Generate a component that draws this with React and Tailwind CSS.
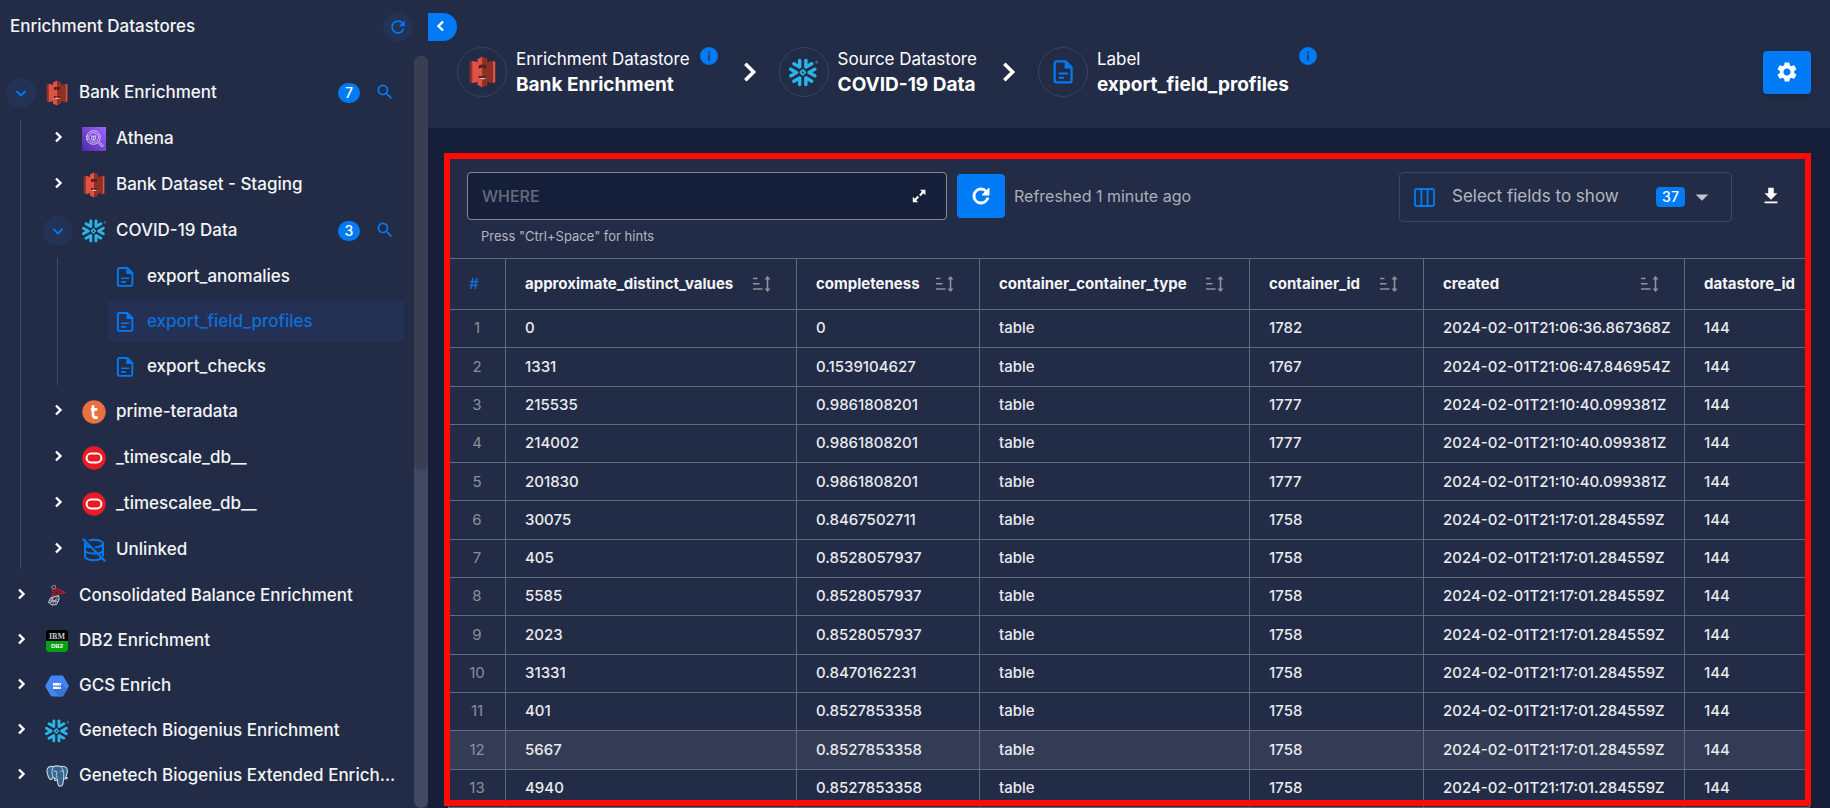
import {
  MdRefresh,
  MdSearch,
  MdSettings,
  MdFileDownload,
  MdArrowDropDown,
} from "react-icons/md";
import { SiSnowflake } from "react-icons/si";

/* ---------- icons ---------- */

function S3Icon({ className = "h-[26px] w-[22px]" }) {
  return (
    <svg viewBox="0 0 22 26" className={className} aria-hidden="true">
      <path d="M0.6 4.6 2.6 3.8V22.2L0.6 21.4Z" fill="#8c3123" />
      <path d="M2.6 3.8 8 5.2V20.8L2.6 22.2Z" fill="#e05243" />
      <path d="M21.4 4.6 19.4 3.8V22.2L21.4 21.4Z" fill="#e05243" />
      <path d="M19.4 3.8 14 5.2V20.8L19.4 22.2Z" fill="#8c3123" />
      <path d="M11 0.4 7 2.4V7.6L11 6.9Z" fill="#e05243" />
      <path d="M11 0.4 15 2.4V7.6L11 6.9Z" fill="#8c3123" />
      <path d="M8 7.4H14V18.6H8Z" fill="#5e1f18" />
      <path d="M11 9.6 7.4 10.2V15.8L11 16.4Z" fill="#e05243" />
      <path d="M11 9.6 14.6 10.2V15.8L11 16.4Z" fill="#8c3123" />
      <path d="M7 18.4 11 19.3 15 18.4 11 17.6Z" fill="#f2b0a9" />
      <path d="M11 19.3 7 18.4V23.6L11 25.6Z" fill="#e05243" />
      <path d="M11 19.3 15 18.4V23.6L11 25.6Z" fill="#8c3123" />
    </svg>
  );
}

function AthenaIcon() {
  return (
    <svg viewBox="0 0 24 24" className="size-6" aria-hidden="true">
      <defs>
        <linearGradient id="athena" x1="0" y1="1" x2="1" y2="0">
          <stop offset="0" stopColor="#4d27a8" />
          <stop offset="1" stopColor="#a166ff" />
        </linearGradient>
      </defs>
      <rect width="24" height="24" fill="url(#athena)" />
      <g fill="none" stroke="#ece4ff" strokeWidth="0.8">
        <circle cx="11.5" cy="10.5" r="6.8" />
        <circle cx="11.5" cy="10.5" r="4.8" />
        <path d="M9.6 8.6v4M9.6 8.6c0 .9 3.8.9 3.8 0v4c0 .9-3.8.9-3.8 0M11.5 9.5v3.6" />
        <path d="M16.2 15.6 19.4 19.4a1 1 0 0 0 1.4-1.4L17.2 14.6" />
        <path d="M4 9.2h2M4 11.8h2" />
      </g>
    </svg>
  );
}

function SnowflakeIcon({ className = "size-6" }) {
  return <SiSnowflake className={`text-[#29b5e8] ${className}`} aria-hidden="true" />;
}

function TeradataIcon() {
  return (
    <svg viewBox="0 0 24 24" className="size-6" aria-hidden="true">
      <circle cx="12" cy="12" r="11.7" fill="#e8713f" />
      <path
        d="M11 5.2v9.6c0 1.9.9 2.8 2.7 2.8h2.1M8.8 9.4h6.4"
        fill="none"
        stroke="#fff"
        strokeWidth="2.7"
      />
    </svg>
  );
}

function OracleIcon() {
  return (
    <svg viewBox="0 0 24 24" className="size-6" aria-hidden="true">
      <circle cx="12" cy="12" r="11.7" fill="#ea1b22" />
      <rect x="4.6" y="7.6" width="14.8" height="8.8" rx="4.4" fill="none" stroke="#fff" strokeWidth="2" />
    </svg>
  );
}

function UnlinkedIcon() {
  return (
    <svg viewBox="0 0 24 24" className="size-6" fill="none" stroke="#007bf5" strokeWidth="2" aria-hidden="true">
      <path d="M7 2.6C8.5 2 10.2 1.8 12 1.8c5 0 9 1.7 9 3.7s-3.4 3.5-8 3.7" />
      <path d="M21 5.5v12.8M21 12c0 1.3-1.7 2.5-4.3 3.1" />
      <path d="M3 4.5v14c0 2 4 3.7 9 3.7 3 0 5.6-.6 7.2-1.5" />
      <path d="M3 6.3C3.6 7.7 6 8.7 8.6 9.1M3 12.4c.8 1.7 4.6 3.2 9 3.2h2.5" />
      <path d="M0.7 0.7 23.3 23.3" />
    </svg>
  );
}

function SqlServerIcon() {
  return (
    <svg viewBox="0 0 24 24" className="size-6" fill="none" aria-hidden="true">
      <path d="M6.5 2.5 10 1.2 11 4.5 7.5 5Z" stroke="#9aa3b4" strokeWidth="0.8" />
      <path
        d="M7.5 5.5 12 4.5 20.5 8.6 13 10.5 9.5 13.5 5.5 15C8 12 8.8 9.5 7.5 5.5Z"
        fill="#8c1d23"
        stroke="#c9252c"
        strokeWidth="0.9"
      />
      <path d="M9 6 13 10.5 16 6.6M12 4.6 12.5 10.5 8.6 9" stroke="#2b2438" strokeWidth="0.6" />
      <path d="M5.5 14 13.5 11.5 14.2 15 11.5 20.5 7 21 3.5 18.5Z" stroke="#c4cad6" strokeWidth="1" />
      <path
        d="M5.5 14 9.5 17 7 21M13.5 11.5 9.5 17 11.5 20.5M3.5 18.5 9.5 17 14.2 15M8.5 13l-3 6.5M5 16l8.5 2"
        stroke="#c4cad6"
        strokeWidth="0.7"
      />
    </svg>
  );
}

function Db2Icon() {
  return (
    <svg viewBox="0 0 24 24" className="size-6" aria-hidden="true">
      <rect x="1" y="1" width="22" height="22" rx="3" fill="#000" />
      <path d="M1 12h22v8a3 3 0 0 1-3 3H4a3 3 0 0 1-3-3Z" fill="#06a010" />
      <text x="12" y="10.2" textAnchor="middle" fontSize="8" fontWeight="700" fill="#c9c9c9" fontFamily="Liberation Serif, serif">
        IBM
      </text>
      <text x="12" y="19.2" textAnchor="middle" fontSize="6" fontWeight="700" fill="#fff" fontFamily="Liberation Sans, sans-serif">
        DB2
      </text>
    </svg>
  );
}

function GcsIcon() {
  return (
    <svg viewBox="0 0 24 24" className="size-6" aria-hidden="true">
      <path
        d="M6.8 1.6h10.4a1.6 1.6 0 0 1 1.3.8l5 8.8a1.6 1.6 0 0 1 0 1.6l-5 8.8a1.6 1.6 0 0 1-1.3.8H6.8a1.6 1.6 0 0 1-1.3-.8l-5-8.8a1.6 1.6 0 0 1 0-1.6l5-8.8a1.6 1.6 0 0 1 1.3-.8Z"
        fill="#4285f4"
      />
      <path d="M16 9 22.3 15.2 18.5 21.6a1.6 1.6 0 0 1-1.3.8h-3.8L8 15Z" fill="#3874d8" />
      <path d="M8 9h8v2.4H8ZM8 12.7h8v2.4H8Z" fill="#fff" />
      <path d="M14 10.2h1M14 13.9h1" stroke="#4285f4" strokeWidth="0.8" />
    </svg>
  );
}

function PostgresIcon() {
  return (
    <svg viewBox="0 0 24 24" className="size-6" strokeLinejoin="round" strokeLinecap="round" aria-hidden="true">
      <path
        d="M8 2.8C5 1.6 2 3 2 6.6c0 3.4 1.8 8.8 3.6 9 1 .1 1.6-1 2.4-2 .6.5 1.5.6 2.3.4-.1 1-1.3 1.5-.8 2 .7.6 2 .4 2.8-.2.2 2.4.2 6.4 2.6 6.4 2 0 3-1.4 3.2-3.4l.5-4.2c1.4.5 3.2.2 3.8-.7.3-.5-1.2-.3-2-.5 1.8-2.8 2.8-7.6 1.2-9.4C20 2.1 17.6 2 15.8 2.6 13.500 1.8 10.2 1.7 8 2.8Z"
        fill="#336791"
        stroke="#cfd8e3"
        strokeWidth="1.1"
      />
      <path
        d="M8 2.8C6.6 5.5 6.8 9.5 8 13.6M15.8 2.6c2.4 2.2 3.6 6.2 2.5 11.6M12.3 15.8c-.2-1.6 0-2.6-.9-3.8-.7-1 .9-2.5.3-4.6M15.8 7.2c1.2-.5 1.9-.2 1.9.5"
        fill="none"
        stroke="#cfd8e3"
        strokeWidth="0.9"
      />
      <circle cx="10" cy="7.3" r="0.7" fill="#fff" />
    </svg>
  );
}

function FileIcon({ className = "h-5 w-[18px]" }) {
  return (
    <svg viewBox="0 0 18 21" className={`text-[#007bf5] ${className}`} aria-hidden="true">
      <path
        d="M3 1h8.5L16.7 6.2V18.5a1.3 1.3 0 0 1-1.3 1.3H3a1.5 1.5 0 0 1-1.5-1.5V2.5A1.5 1.5 0 0 1 3 1Z"
        fill="none"
        stroke="currentColor"
        strokeWidth="2"
      />
      <path d="M10.5 1v6.4H17Z" fill="currentColor" />
      <path d="M5 11.8h8.5M5 15.6h5" stroke="currentColor" strokeWidth="1.8" />
    </svg>
  );
}

function Chevron({ dir = "right", className = "size-3.5", width = 2.4 }) {
  const d = {
    right: "M5 2.5 9.5 7 5 11.5",
    left: "M9 2.5 4.5 7 9 11.5",
    down: "M2.5 5 7 9.5 11.5 5",
  }[dir];
  return (
    <svg viewBox="0 0 14 14" className={className} fill="none" stroke="currentColor" strokeWidth={width} aria-hidden="true">
      <path d={d} />
    </svg>
  );
}

function InfoIcon() {
  return (
    <svg viewBox="0 0 18 18" className="size-[18px] shrink-0" role="img" aria-label="Info">
      <circle cx="9" cy="9" r="9" fill="#007bf5" />
      <path d="M9 4.5v2M9 7.8v6" stroke="#1d3d78" strokeWidth="1.8" />
    </svg>
  );
}

function SortIcon() {
  return (
    <svg viewBox="0 0 18 16" className="h-4 w-[18px]" fill="none" stroke="#8f9298" strokeWidth="1.6" aria-hidden="true">
      <path d="M0 2.5h4.5M0 7.8h6.5M0 13h9.5" />
      <path d="M14.5 2v12" />
      <path d="M14.5 0 17.5 3.6h-6ZM14.5 16 17.5 12.4h-6Z" fill="#8f9298" stroke="none" />
    </svg>
  );
}

function ExpandIcon() {
  return (
    <svg viewBox="0 0 14 14" className="size-3.5" fill="currentColor" aria-hidden="true">
      <path d="M8 0.8h5.4v5.4l-1.9-1.9-2.9 2.9-1.5-1.5 2.8-2.9ZM6.2 13.2H.8V7.8l1.9 1.9 2.9-2.9 1.5 1.5-2.9 2.9Z" />
    </svg>
  );
}

function ColumnsIcon() {
  return (
    <svg viewBox="0 0 21 19" className="h-[19px] w-[21px] shrink-0" fill="none" stroke="#007bf5" strokeWidth="1.8" aria-hidden="true">
      <rect x="1" y="1" width="19" height="17" rx="1.5" />
      <path d="M7.4 1v17M13.6 1v17" />
    </svg>
  );
}

/* ---------- sidebar ---------- */

const children = [
  { name: "Athena", icon: <AthenaIcon /> },
  { name: "Bank Dataset - Staging", icon: <S3Icon /> },
  {
    name: "COVID-19 Data",
    icon: <SnowflakeIcon />,
    count: 3,
    leaves: ["export_anomalies", "export_field_profiles", "export_checks"],
  },
  { name: "prime-teradata", icon: <TeradataIcon /> },
  { name: "_timescale_db__", icon: <OracleIcon /> },
  { name: "_timescalee_db__", icon: <OracleIcon /> },
  { name: "Unlinked", icon: <UnlinkedIcon /> },
];

const roots = [
  { name: "Bank Enrichment", icon: <S3Icon />, count: 7, children },
  { name: "Consolidated Balance Enrichment", icon: <SqlServerIcon /> },
  { name: "DB2 Enrichment", icon: <Db2Icon /> },
  { name: "GCS Enrich", icon: <GcsIcon /> },
  { name: "Genetech Biogenius Enrichment", icon: <SnowflakeIcon /> },
  { name: "Genetech Biogenius Extended Enrich...", icon: <PostgresIcon /> },
];

function TreeRow({ item, nested = false }) {
  const open = Boolean(item.count);
  return (
    <div
      className={`flex items-center pr-[19px] ${nested || open ? "h-[46px]" : "h-[45px]"} ${
        nested ? "pl-[23px]" : "pl-1.5"
      }`}
    >
      <button
        type="button"
        aria-label={`Toggle ${item.name}`}
        aria-expanded={open}
        className={`flex size-[30px] shrink-0 items-center justify-center rounded-full ${
          open ? "bg-[#233255] text-[#007bf5]" : "pb-1 text-white"
        }`}
      >
        <Chevron dir={open ? "down" : "right"} width={open ? 1.8 : 2.4} />
      </button>
      <span className="ml-[9px] flex w-6 shrink-0 justify-center">{item.icon}</span>
      <a href="#" className="ml-2.5 whitespace-nowrap text-[17px] font-medium text-[#f4f5f7]">
        {item.name}
      </a>
      {open && (
        <>
          <span className="ml-auto flex h-5 w-[22px] items-center justify-center rounded-full bg-[#007bf5] text-sm font-medium text-white">
            {item.count}
          </span>
          <button type="button" aria-label={`Search ${item.name}`} className="ml-[15px] pb-0.5 text-[#007bf5]">
            <MdSearch className="size-5" />
          </button>
        </>
      )}
    </div>
  );
}

function LeafRow({ name }) {
  const active = name === "export_field_profiles";
  return (
    <li className="flex h-[45px] items-center pr-2.5 pl-[51px]">
      <a
        href="#"
        aria-current={active ? "page" : undefined}
        className={`flex h-[41px] flex-1 items-center gap-[13px] rounded px-2 text-[17px] font-medium ${
          active ? "bg-[#243154] text-[#0b6fd9]" : "text-[#f4f5f7]"
        }`}
      >
        <FileIcon />
        {name}
      </a>
    </li>
  );
}

const branchLine = "relative before:absolute before:inset-y-1 before:left-0 before:w-px before:bg-[#434b62]";

function Sidebar() {
  return (
    <aside className="flex w-[428px] shrink-0 flex-col bg-[#232c46]">
      <div className="flex h-14 shrink-0 items-center justify-between pr-[15px] pb-0.5 pl-2.5">
        <h1 className="text-[17px] font-medium text-[#f4f5f7]">Enrichment Datastores</h1>
        <button
          type="button"
          aria-label="Refresh datastores"
          className="flex size-[30px] items-center justify-center rounded-full bg-[#233255] text-[#007bf5]"
        >
          <MdRefresh className="size-5" />
        </button>
      </div>
      <div className="flex min-h-0 flex-1">
        <ul className="min-w-0 flex-1 overflow-hidden pt-3.5">
          {roots.map((root) => (
            <li key={root.name}>
              <TreeRow item={root} />
              {root.children && (
                <ul className={`ml-5 ${branchLine}`}>
                  {root.children.map((child) => (
                    <li key={child.name}>
                      <TreeRow item={child} nested />
                      {child.leaves && (
                        <ul className={`ml-[37px] ${branchLine}`}>
                          {child.leaves.map((leaf) => (
                            <LeafRow key={leaf} name={leaf} />
                          ))}
                        </ul>
                      )}
                    </li>
                  ))}
                </ul>
              )}
            </li>
          ))}
        </ul>
        <div className="w-3.5 rounded-full bg-[#424862]">
          <div className="h-[55%] rounded-full bg-[#3a3e51]" />
        </div>
      </div>
    </aside>
  );
}

/* ---------- header ---------- */

function Crumb({ icon, label, value, info }) {
  return (
    <div className="flex items-center">
      <span className="flex size-[50px] shrink-0 items-center justify-center rounded-full border border-[#3a435b]">
        {icon}
      </span>
      <span className="ml-[9px] flex flex-col whitespace-nowrap text-white">
        <span className="text-[17px] leading-[26px]">{label}</span>
        <span className="text-[19px] leading-[26px] font-bold">{value}</span>
      </span>
      {info && (
        <span className="mt-px ml-2.5 self-start">
          <InfoIcon />
        </span>
      )}
    </div>
  );
}

function Header() {
  return (
    <header className="flex h-32 shrink-0 items-center bg-[#232c46] pr-[19px]">
      <button
        type="button"
        aria-label="Collapse sidebar"
        className="mt-[13px] flex h-7 w-[29px] shrink-0 items-center justify-center self-start rounded-r-full bg-[#007bf5] pr-1 pb-0.5 text-white"
      >
        <Chevron dir="left" />
      </button>
      <nav aria-label="Breadcrumb" className="mt-4 flex items-center">
        <Crumb icon={<S3Icon className="h-8 w-[27px]" />} label="Enrichment Datastore" value="Bank Enrichment" info />
        <Chevron className="mr-[17px] ml-[18px] size-[26px] text-white" width={1.9} />
        <Crumb icon={<SnowflakeIcon className="size-[29px]" />} label="Source Datastore" value="COVID-19 Data" />
        <Chevron className="mr-[17px] ml-[18px] size-[26px] text-white" width={1.9} />
        <Crumb icon={<FileIcon className="h-6 w-5" />} label="Label" value="export_field_profiles" info />
      </nav>
      <button
        type="button"
        aria-label="Settings"
        className="mt-4 ml-auto flex h-[43px] w-12 items-center justify-center rounded bg-[#007bf5] text-white shadow-md"
      >
        <MdSettings className="size-6" />
      </button>
    </header>
  );
}

/* ---------- table ---------- */

const columns = [
  ["approximate_distinct_values", "w-[291px]"],
  ["completeness", "w-[183px]"],
  ["container_container_type", "w-[270px]"],
  ["container_id", "w-[174px]"],
  ["created", "w-[261px]"],
  ["datastore_id", ""],
];

const rows = [
  ["0", "0", "1782", "2024-02-01T21:06:36.867368Z"],
  ["1331", "0.1539104627", "1767", "2024-02-01T21:06:47.846954Z"],
  ["215535", "0.9861808201", "1777", "2024-02-01T21:10:40.099381Z"],
  ["214002", "0.9861808201", "1777", "2024-02-01T21:10:40.099381Z"],
  ["201830", "0.9861808201", "1777", "2024-02-01T21:10:40.099381Z"],
  ["30075", "0.8467502711", "1758", "2024-02-01T21:17:01.284559Z"],
  ["405", "0.8528057937", "1758", "2024-02-01T21:17:01.284559Z"],
  ["5585", "0.8528057937", "1758", "2024-02-01T21:17:01.284559Z"],
  ["2023", "0.8528057937", "1758", "2024-02-01T21:17:01.284559Z"],
  ["31331", "0.8470162231", "1758", "2024-02-01T21:17:01.284559Z"],
  ["401", "0.8527853358", "1758", "2024-02-01T21:17:01.284559Z"],
  ["5667", "0.8527853358", "1758", "2024-02-01T21:17:01.284559Z"],
  ["4940", "0.8527853358", "1758", "2024-02-01T21:17:01.284559Z"],
];

function Toolbar() {
  return (
    <div className="flex h-[104px] shrink-0 items-start pt-[18px] pr-7 pl-[19px]">
      <div className="w-[480px]">
        <div className="flex h-12 items-center rounded border border-[#858890] bg-[#161f39] pr-5 pl-3.5">
          <input
            aria-label="Where clause"
            aria-describedby="where-hint"
            placeholder="WHERE"
            className="min-w-0 flex-1 bg-transparent font-medium text-white outline-none placeholder:text-[#656c7c]"
          />
          <button type="button" aria-label="Expand editor" className="text-white">
            <ExpandIcon />
          </button>
        </div>
        <p id="where-hint" className="mt-1.5 ml-3.5 text-[13px] leading-5 text-[#b4b7c0]">
          Press "Ctrl+Space" for hints
        </p>
      </div>
      <div className="ml-2.5 flex h-12 items-center gap-[9px]">
        <button
          type="button"
          aria-label="Refresh table"
          className="flex h-11 w-12 items-center justify-center rounded bg-[#007bf5] text-white"
        >
          <MdRefresh className="size-6 [&_path:last-child]:stroke-current [&_path:last-child]:stroke-1" />
        </button>
        <span className="text-base text-[#abafb9]">Refreshed 1 minute ago</span>
      </div>
      <div className="ml-auto flex h-[50px] w-[333px] items-center rounded border border-[#3d465d] px-3.5">
        <ColumnsIcon />
        <select
          aria-label="Fields to show"
          className="ml-[17px] min-w-0 flex-1 appearance-none bg-transparent text-[17px] text-[#b4b7c0] outline-none"
        >
          <option>Select fields to show</option>
        </select>
        <span className="flex h-5 w-[29px] items-center justify-center rounded bg-[#007bf5] text-sm font-medium text-white">
          37
        </span>
        <MdArrowDropDown className="ml-0.5 size-[30px] text-[#c4c6cc]" aria-hidden="true" />
      </div>
      <button type="button" aria-label="Download" className="ml-7 flex h-12 items-center text-white">
        <MdFileDownload className="size-[22px]" />
      </button>
    </div>
  );
}

function DataTable() {
  return (
    <table className="h-full w-full table-fixed border-collapse text-left text-[15px]">
      <thead>
        <tr className="h-[51px]">
          <th scope="col" className="w-[57px] border border-[#626a7d] pr-1.5 text-center font-medium text-[#1673d6]">
            #
          </th>
          {columns.map(([name, width]) => (
            <th key={name} scope="col" className={`border border-[#626a7d] pr-[25px] pl-[19px] ${width}`}>
              <span className="flex items-center justify-between font-bold text-[#f4f5f7]">
                {name}
                {width && <SortIcon />}
              </span>
            </th>
          ))}
        </tr>
      </thead>
      <tbody>
        {rows.map(([distinct, completeness, id, created], i) => (
          <tr key={i} className={i === 11 ? "bg-[#343b54]" : ""}>
            <td className="border border-[#626a7d] text-center text-[#8c9099]">{i + 1}</td>
            {[distinct, completeness, "table", id, created, "144"].map((value, c) => (
              <td key={c} className="border border-[#626a7d] pl-[19px] font-medium whitespace-nowrap text-[#e9ebef]">
                {value}
              </td>
            ))}
          </tr>
        ))}
      </tbody>
    </table>
  );
}

export default function App() {
  return (
    <div className="flex h-screen overflow-hidden bg-[#161f39] font-[Inter,sans-serif]">
      <Sidebar />
      <main className="flex min-w-0 flex-1 flex-col">
        <Header />
        <section className="relative mx-5 mt-[26px] flex min-h-0 flex-1 flex-col bg-[#232c46]">
          <Toolbar />
          <div className="min-h-0 flex-1 overflow-hidden">
            <DataTable />
          </div>
          <div className="pointer-events-none absolute -top-px -right-px bottom-0.5 -left-1 border-[6px] border-[#ff0a05]" />
        </section>
      </main>
    </div>
  );
}
